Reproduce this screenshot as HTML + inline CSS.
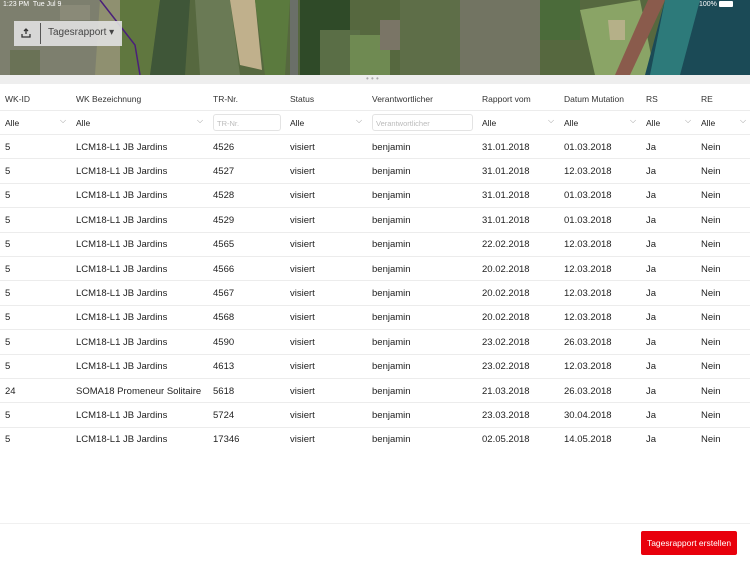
<!DOCTYPE html>
<html><head><meta charset="utf-8"><style>
*{margin:0;padding:0;box-sizing:border-box}
body{width:750px;height:562px;overflow:hidden;background:#fff;font-family:"Liberation Sans",sans-serif;color:#222;position:relative}
#map{position:absolute;left:0;top:0;width:750px;height:75px}
.bar{position:absolute;left:0;top:75px;width:750px;height:9px;background:#eeeeee}
.t{position:absolute;font-size:10.5px;white-space:nowrap}
.h{font-size:8.5px;color:#333}
.f{font-size:8.5px;color:#222}
.c{position:absolute;font-size:8px;color:#999}
.line{position:absolute;left:0;width:750px;height:1px;background:#ececec}
.inp{position:absolute;height:17px;border:1px solid #e3e3e3;border-radius:3px;font-size:7.5px;color:#bbb;padding:4px 3px}
.btn{position:absolute;left:641px;top:531px;width:96px;height:24px;background:#e8000c;color:#fff;font-size:8.5px;text-align:center;line-height:24px;border-radius:2px}
</style></head><body>
<svg id="map" viewBox="0 0 750 75" preserveAspectRatio="none">
<rect width="750" height="75" fill="#56683f"/>
<rect x="0" y="0" width="120" height="75" fill="#7d7f6e"/>
<rect x="10" y="50" width="30" height="25" fill="#6a7256"/>
<rect x="60" y="5" width="30" height="15" fill="#8a8a78"/>
<polygon points="100,0 160,0 140,75 95,75" fill="#8f9070"/>
<polygon points="120,0 160,0 150,75 120,75" fill="#60773f"/>
<polygon points="160,0 190,0 185,75 150,75" fill="#3f5638"/>
<polygon points="195,0 230,0 240,75 200,75" fill="#6a7a55"/>
<polygon points="230,0 255,0 262,70 240,65" fill="#c0b08c"/>
<polygon points="255,0 290,0 285,75 265,75" fill="#5b7a3e"/>
<rect x="290" y="0" width="8" height="75" fill="#6a6f68"/>
<rect x="300" y="0" width="50" height="75" fill="#2f4a28"/>
<rect x="320" y="30" width="40" height="45" fill="#5a6e46"/>
<rect x="350" y="35" width="40" height="40" fill="#6f8a52"/>
<rect x="380" y="20" width="30" height="30" fill="#7a7566"/>
<rect x="400" y="0" width="60" height="75" fill="#5e6e48"/>
<rect x="460" y="0" width="80" height="75" fill="#727462"/>
<rect x="540" y="0" width="40" height="40" fill="#4b6b3a"/>
<polygon points="580,10 640,0 655,75 595,75" fill="#8aa466"/>
<polygon points="608,20 625,20 625,40 610,40" fill="#b5b088"/>
<polygon points="648,0 665,0 630,75 615,75" fill="#8a5b4c"/>
<polygon points="665,0 750,0 750,75 645,75" fill="#1b4a56"/>
<polygon points="665,0 700,0 680,75 650,75" fill="#2d7a7a"/>
<polyline points="100,0 135,45 140,75" stroke="#4a1f7a" stroke-width="1.5" fill="none"/>
</svg>
<div class="t" style="left:3px;top:1px;font-size:7px;color:#fff">1:23 PM&nbsp; Tue Jul 9</div>
<div class="t" style="left:699px;top:1px;font-size:7px;color:#fff">100% <span style="display:inline-block;width:14px;height:6px;background:#fff;border-radius:1px;vertical-align:middle"></span></div>
<div style="position:absolute;left:14px;top:21px;width:108px;height:25px;background:rgba(225,225,225,.9)"></div>
<div style="position:absolute;left:40px;top:23px;width:1px;height:21px;background:#555"></div>
<svg style="position:absolute;left:21px;top:28px" width="10" height="10" viewBox="0 0 10 10"><path d="M5 1v5M3 3l2-2 2 2M1 6v3h8V6" stroke="#333" stroke-width="1.3" fill="none"/></svg>
<div class="t" style="left:48px;top:27px;font-size:10px;color:#444">Tagesrapport ▾</div>
<div class="bar"></div>
<div class="c" style="left:366px;top:74px;font-size:8px;color:#aaa">• • •</div>
<div class="t h" style="left:5px;top:94px">WK-ID</div>
<div class="t h" style="left:76px;top:94px">WK Bezeichnung</div>
<div class="t h" style="left:213px;top:94px">TR-Nr.</div>
<div class="t h" style="left:290px;top:94px">Status</div>
<div class="t h" style="left:372px;top:94px">Verantwortlicher</div>
<div class="t h" style="left:482px;top:94px">Rapport vom</div>
<div class="t h" style="left:564px;top:94px">Datum Mutation</div>
<div class="t h" style="left:646px;top:94px">RS</div>
<div class="t h" style="left:701px;top:94px">RE</div>
<div class="line" style="top:110px"></div>
<div class="t f" style="left:5px;top:118px">Alle</div><div class="c" style="left:60px;top:116px">⌵</div>
<div class="t f" style="left:76px;top:118px">Alle</div><div class="c" style="left:197px;top:116px">⌵</div>
<div class="inp" style="left:213px;top:114px;width:68px">TR-Nr.</div>
<div class="t f" style="left:290px;top:118px">Alle</div><div class="c" style="left:356px;top:116px">⌵</div>
<div class="inp" style="left:372px;top:114px;width:101px">Verantwortlicher</div>
<div class="t f" style="left:482px;top:118px">Alle</div><div class="c" style="left:548px;top:116px">⌵</div>
<div class="t f" style="left:564px;top:118px">Alle</div><div class="c" style="left:630px;top:116px">⌵</div>
<div class="t f" style="left:646px;top:118px">Alle</div><div class="c" style="left:685px;top:116px">⌵</div>
<div class="t f" style="left:701px;top:118px">Alle</div><div class="c" style="left:740px;top:116px">⌵</div>
<div class="line" style="top:134px"></div>
<div id="rows"></div>
<div class="line" style="top:523px;background:#f0f0f0"></div>
<div class="btn">Tagesrapport erstellen</div>
<script>
var d=[["5","LCM18-L1 JB Jardins","4526","31.01.2018","01.03.2018"],["5","LCM18-L1 JB Jardins","4527","31.01.2018","12.03.2018"],["5","LCM18-L1 JB Jardins","4528","31.01.2018","01.03.2018"],["5","LCM18-L1 JB Jardins","4529","31.01.2018","01.03.2018"],["5","LCM18-L1 JB Jardins","4565","22.02.2018","12.03.2018"],["5","LCM18-L1 JB Jardins","4566","20.02.2018","12.03.2018"],["5","LCM18-L1 JB Jardins","4567","20.02.2018","12.03.2018"],["5","LCM18-L1 JB Jardins","4568","20.02.2018","12.03.2018"],["5","LCM18-L1 JB Jardins","4590","23.02.2018","26.03.2018"],["5","LCM18-L1 JB Jardins","4613","23.02.2018","12.03.2018"],["24","SOMA18 Promeneur Solitaire","5618","21.03.2018","26.03.2018"],["5","LCM18-L1 JB Jardins","5724","23.03.2018","30.04.2018"],["5","LCM18-L1 JB Jardins","17346","02.05.2018","14.05.2018"]];
var h="";d.forEach(function(r,i){var y=134+i*24.4;var ty=y+7.5;
var cols=[[5,r[0]],[76,r[1]],[213,r[2]],[290,"visiert"],[372,"benjamin"],[482,r[3]],[564,r[4]],[646,"Ja"],[701,"Nein"]];
cols.forEach(function(c){h+='<div class="t" style="left:'+c[0]+'px;top:'+ty+'px;font-size:9.5px">'+c[1]+'</div>'});
if(i<d.length-1)h+='<div class="line" style="top:'+(y+24.4)+'px"></div>';});
document.getElementById("rows").innerHTML=h;
</script>
</body></html>
